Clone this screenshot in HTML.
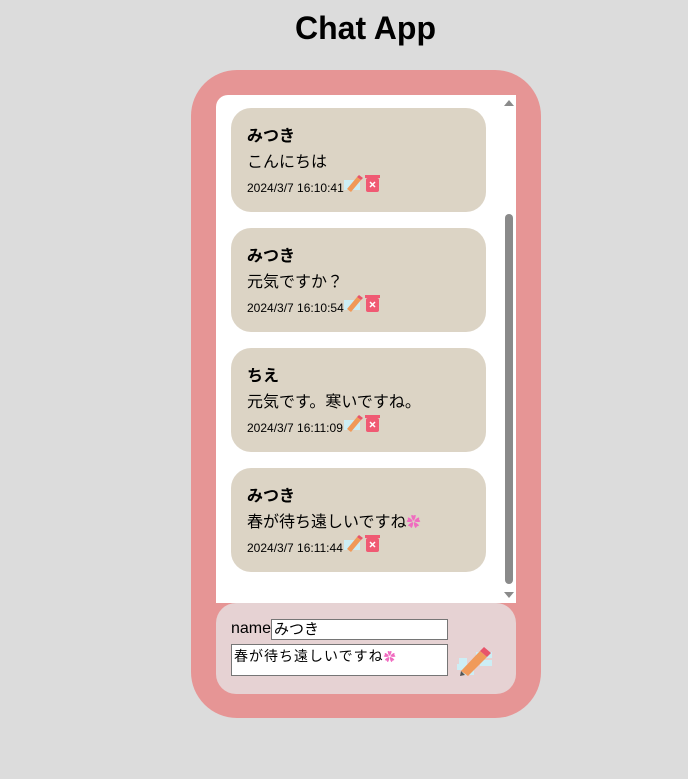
<!DOCTYPE html>
<html><head><meta charset="utf-8"><style>
body{margin:0;background:#dcdcdc;width:688px;height:779px;position:relative;font-family:"Liberation Sans","Noto Sans CJK JP",sans-serif;overflow:hidden}
h1{position:absolute;top:10px;left:0;width:731px;text-align:center;margin:0;font-size:32px;font-weight:bold;line-height:37px}
.outer{position:absolute;left:191px;top:70px;width:350px;height:648px;background:#e69595;border-radius:46px}
.inner{position:absolute;left:216px;top:95px;width:300px;height:508px;background:#fff;border-radius:12px 0 0 0}
.card{position:absolute;left:231px;width:255px;height:104px;background:#dcd4c5;border-radius:20px}
.card .n{position:absolute;left:16px;top:14px;font-weight:bold;font-size:16px}
.card .m{position:absolute;left:16px;top:40px;font-size:16px}
.card .d{position:absolute;left:16px;top:73px;font-size:12px}
.ic{position:absolute;top:64px;left:112px}
.sb{position:absolute;left:505px;top:214px;width:8px;height:370px;background:#8a8a8a;border-radius:4px}
.form{position:absolute;left:216px;top:603px;width:300px;height:91px;background:#e6d2d3;border-radius:20px}
.inp{position:absolute;left:271px;top:619px;width:177px;height:21px;border:1px solid #767676;background:#fff;font-size:15px;line-height:19px;padding-left:2px;box-sizing:border-box}
.ta{position:absolute;left:231px;top:644px;width:217px;height:32px;border:1px solid #767676;background:#fff;font-size:14px;line-height:22px;padding-left:2px;box-sizing:border-box;letter-spacing:1px}
</style></head><body>
<h1>Chat App</h1>
<div class="outer"></div>
<div class="inner"></div>
<svg style="position:absolute;left:503px;top:99px" width="12" height="8"><path d="M1 7L6 1L11 7Z" fill="#8a8a8a"/></svg>
<svg style="position:absolute;left:503px;top:591px" width="12" height="8"><path d="M1 1L6 7L11 1Z" fill="#8a8a8a"/></svg>
<div class="sb"></div>

<div class="card" style="top:108px"><div class="n">みつき</div><div class="m">こんにちは</div><div class="d">2024/3/7 16:10:41</div>
<svg class="ic" width="40" height="22"><rect x="1" y="8" width="16" height="10" fill="#cdeef5"/><path d="M4 17L14 5l4 3L8 20Z" fill="#f09a5a"/><path d="M14 5l2-2 4 3-2 2Z" fill="#e8546a"/><rect x="23" y="6" width="13" height="14" rx="2" fill="#f05a73"/><rect x="22" y="3" width="15" height="3" fill="#f05a73"/><path d="M27 10l5 5M32 10l-5 5" stroke="#fff" stroke-width="1.5"/></svg></div>
<div class="card" style="top:228px"><div class="n">みつき</div><div class="m">元気ですか？</div><div class="d">2024/3/7 16:10:54</div>
<svg class="ic" width="40" height="22"><rect x="1" y="8" width="16" height="10" fill="#cdeef5"/><path d="M4 17L14 5l4 3L8 20Z" fill="#f09a5a"/><path d="M14 5l2-2 4 3-2 2Z" fill="#e8546a"/><rect x="23" y="6" width="13" height="14" rx="2" fill="#f05a73"/><rect x="22" y="3" width="15" height="3" fill="#f05a73"/><path d="M27 10l5 5M32 10l-5 5" stroke="#fff" stroke-width="1.5"/></svg></div>
<div class="card" style="top:348px"><div class="n">ちえ</div><div class="m">元気です。寒いですね。</div><div class="d">2024/3/7 16:11:09</div>
<svg class="ic" width="40" height="22"><rect x="1" y="8" width="16" height="10" fill="#cdeef5"/><path d="M4 17L14 5l4 3L8 20Z" fill="#f09a5a"/><path d="M14 5l2-2 4 3-2 2Z" fill="#e8546a"/><rect x="23" y="6" width="13" height="14" rx="2" fill="#f05a73"/><rect x="22" y="3" width="15" height="3" fill="#f05a73"/><path d="M27 10l5 5M32 10l-5 5" stroke="#fff" stroke-width="1.5"/></svg></div>
<div class="card" style="top:468px"><div class="n">みつき</div><div class="m">春が待ち遠しいですね<span style="color:#f06cc0;font-size:14px">✿</span></div><div class="d">2024/3/7 16:11:44</div>
<svg class="ic" width="40" height="22"><rect x="1" y="8" width="16" height="10" fill="#cdeef5"/><path d="M4 17L14 5l4 3L8 20Z" fill="#f09a5a"/><path d="M14 5l2-2 4 3-2 2Z" fill="#e8546a"/><rect x="23" y="6" width="13" height="14" rx="2" fill="#f05a73"/><rect x="22" y="3" width="15" height="3" fill="#f05a73"/><path d="M27 10l5 5M32 10l-5 5" stroke="#fff" stroke-width="1.5"/></svg></div>

<div class="form"></div>
<div style="position:absolute;left:231px;top:620px;font-size:16px">name</div>
<div class="inp">みつき</div>
<div class="ta">春が待ち遠しいですね<span style="color:#f06cc0;font-size:12px">✿</span></div>
<svg style="position:absolute;left:456px;top:641px" width="38" height="36"><path d="M3 20h8M1 26h14M6 31h12M20 14h16M24 22h12" stroke="#cdeef5" stroke-width="6"/><path d="M5 30L24 10l7 6L12 35Z" fill="#f09a5a"/><path d="M24 10l4-4 7 6-4 4Z" fill="#e8546a"/><path d="M5 30l-1 5 5-1Z" fill="#555"/></svg>
</body></html>
